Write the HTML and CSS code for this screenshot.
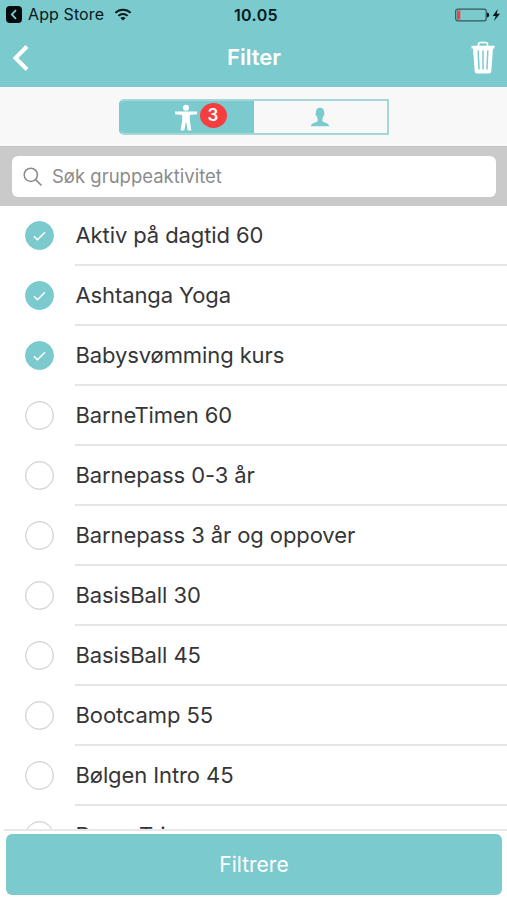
FILE: index.html
```html
<!DOCTYPE html>
<html lang="no">
<head>
<meta charset="utf-8">
<title>Filter</title>
<link rel="stylesheet" href="styles.css">
</head>
<body>
<div class="app">
  <header class="header">
    <div class="status">
      <div class="status-left">
        <svg class="back-app" width="16" height="17" viewBox="0 0 16 17"><rect width="16" height="17" rx="4" fill="#050b0c"/><path d="M10 4.2 5.8 8.5 10 12.8" fill="none" stroke="#7bcace" stroke-width="1.8"/></svg>
        <span class="carrier">App Store</span>
        <svg class="wifi" width="18" height="13" viewBox="0 0 18 13"><g fill="none" stroke="#07191d" stroke-width="2"><path d="M1.4 4.9C5.6.8 12.4.8 16.600 4.900"/><path d="M4.400 7.900C7 5.400 11 5.400 13.600 7.900"/></g><path d="M6.300 10Q9 7.800 11.700 10L9 12.600Z" fill="#07191d"/></svg>
      </div>
      <span class="time">10.05</span>
      <svg class="battery" width="46" height="14" viewBox="0 0 46 14"><rect x=".7" y="1.200" width="30.500" height="11.600" rx="2" fill="none" stroke="#35575b" stroke-width="1.200"/><rect x="2" y="2.500" width="3.300" height="9" fill="#ef4440"/><path d="M31.800 4.500Q34.300 4.800 34.300 7T31.800 9.500Z" fill="#07191d"/><path d="M42.700 1 37.700 8H40.700L39 13 45 5.700H41.800Z" fill="#07191d"/></svg>
    </div>
    <div class="nav">
      <svg class="back" width="18" height="28" viewBox="0 0 18 28"><path d="M16 2.500 4.500 14 16 25.500" fill="none" stroke="#fff" stroke-width="4"/></svg>
      <h1 class="title">Filter</h1>
      <svg class="trash" width="24" height="34" viewBox="0 0 24 34"><path d="M7.500 5V3.500Q7.500 1.500 9.500 1.500H14.500Q16.500 1.500 16.500 3.500V5" fill="none" stroke="#fff" stroke-width="1.600"/><path d="M.5 4.800H23.500V7.600H22L20.300 30.500Q20.100 32.500 18 32.500H6Q3.900 32.500 3.700 30.500L2 7.600H.5Z" fill="#fff"/><path d="M7.200 10 8 28M12 10V28M16.800 10 16 28" stroke="#7bcace" stroke-width="1.500" stroke-linecap="round"/></svg>
    </div>
  </header>
  <div class="tabs">
    <div class="segments">
      <div class="segment segment-active">
        <svg class="figure" width="24" height="28" viewBox="0 0 24 28"><circle cx="12" cy="3.700" r="3" fill="#fff"/><path d="M1 7.600H23V10.300L15.800 11V16.500L17.400 26.500H13.700L12.300 18.500H11.700L10.300 26.500H6.600L8.200 16.500V11L1 10.300Z" fill="#fff"/></svg>
        <span class="badge">3</span>
      </div>
      <div class="segment">
        <svg class="person" width="20" height="20" viewBox="0 0 20 20"><path d="M10 .8C12.800.8 14.300 2.700 14.100 5.700C14.800 6 14.400 8.200 13.600 8.700C13.300 10.200 12.600 11 12.300 11.700V14C13 15.500 18.600 15.500 19.200 19.200H.8C1.400 15.500 7 15.500 7.700 14V11.700C7.400 11 6.700 10.200 6.400 8.700C5.600 8.200 5.200 6 5.900 5.700C5.700 2.700 7.200.8 10 .8Z" fill="#7bcace"/></svg>
      </div>
    </div>
  </div>
  <div class="search">
    <div class="field">
      <svg class="glass" width="20" height="20" viewBox="0 0 20 20"><circle cx="7.800" cy="7.800" r="6.600" fill="none" stroke="#8b8b8b" stroke-width="1.500"/><path d="M12.600 12.600 18.500 18.500" stroke="#8b8b8b" stroke-width="1.700"/></svg>
      <span class="placeholder">Søk gruppeaktivitet</span>
    </div>
  </div>
  <ul class="list">
    <li class="row"><span class="check on"><svg width="14" height="12" viewBox="0 0 14 12"><path d="M1 6.300 4.400 9.700 12 2.200" fill="none" stroke="#fff" stroke-width="1.500"/></svg></span><span class="label">Aktiv på dagtid 60</span></li>
    <li class="row"><span class="check on"><svg width="14" height="12" viewBox="0 0 14 12"><path d="M1 6.300 4.400 9.700 12 2.200" fill="none" stroke="#fff" stroke-width="1.500"/></svg></span><span class="label">Ashtanga Yoga</span></li>
    <li class="row"><span class="check on"><svg width="14" height="12" viewBox="0 0 14 12"><path d="M1 6.300 4.400 9.700 12 2.200" fill="none" stroke="#fff" stroke-width="1.500"/></svg></span><span class="label">Babysvømming kurs</span></li>
    <li class="row"><span class="check"></span><span class="label">BarneTimen 60</span></li>
    <li class="row"><span class="check"></span><span class="label">Barnepass 0-3 år</span></li>
    <li class="row"><span class="check"></span><span class="label">Barnepass 3 år og oppover</span></li>
    <li class="row"><span class="check"></span><span class="label">BasisBall 30</span></li>
    <li class="row"><span class="check"></span><span class="label">BasisBall 45</span></li>
    <li class="row"><span class="check"></span><span class="label">Bootcamp 55</span></li>
    <li class="row"><span class="check"></span><span class="label">Bølgen Intro 45</span></li>
    <li class="row"><span class="check"></span><span class="label">DanseTrim</span></li>
  </ul>
  <footer class="footer"><button class="submit">Filtrere</button></footer>
</div>
</body>
</html>
```
FILE: styles.css
```css
* { box-sizing: border-box; }
body { margin: 0; font-family: Inter, "Liberation Sans", sans-serif; color: #353538; background: #fff; }
svg { display: block; flex: none; }
.app { width: 507px; height: 900px; display: flex; flex-direction: column; overflow: hidden; }
.header { height: 87px; flex: none; background: #7bcace; }
.status { height: 29px; display: grid; grid-template-columns: 1fr auto 1fr; align-items: center; padding: 0 6px; color: #07191d; }
.status-left { display: flex; align-items: center; height: 28px; align-self: start; }
.carrier { margin-left: 6px; font-size: 16px; line-height: 20px; letter-spacing: 0.1px; }
.wifi { margin-left: 10px; }
.time { padding-left: 5px; font-size: 16px; line-height: 20px; font-weight: 600; letter-spacing: 0.4px; }
.battery { justify-self: end; }
.nav { height: 58px; display: grid; grid-template-columns: 1fr auto 1fr; align-items: center; padding: 0 12px 0 11px; }
.title { margin: 0; padding: 0 0 2px 2px; font-size: 22px; line-height: 28px; font-weight: 600; color: #fff; }
.trash { justify-self: end; }
.tabs { height: 59px; flex: none; display: flex; justify-content: center; padding-top: 12px; background: #f8f8f8; }
.segments { width: 270px; height: 36px; display: flex; border: 2px solid #a5d6d8; border-left-color: #7bcace; border-radius: 5px 0 0 5px; overflow: hidden; }
.segment { flex: 0 0 50%; display: flex; align-items: center; justify-content: center; }
.segment-active { background: #7bcace; gap: 2px; padding-left: 26px; }
.figure { margin-top: 1px; }
.badge { width: 27px; height: 25px; border-radius: 50%; background: #f63e3e; color: #fff; font-size: 17px; line-height: 25px; font-weight: 600; text-align: center; margin-top: -4px; }
.person { margin-top: -1px; }
.search { height: 60px; flex: none; padding: 9px 11px 9px 12px; background: #cacaca; border-top: 1px solid #c2c2c2; }
.field { height: 41px; display: flex; align-items: center; gap: 9px; padding-left: 11px; background: #fff; border-radius: 6px; }
.placeholder { padding-bottom: 1px; font-size: 18.5px; line-height: 24px; color: #8b8b8b; }
.list { flex: 1; min-height: 0; margin: 0; padding: 0; list-style: none; overflow: hidden; }
.row { height: 60px; display: flex; padding-left: 25px; }
.check { width: 29px; height: 29px; margin: 15px 21px 0 0; flex: none; border: 1.5px solid #d0d0d0; box-shadow: inset 0 0 0 0.5px #dcdcdc; border-radius: 50%; display: flex; align-items: center; justify-content: center; }
.check.on { border-color: #7bcace; background: #7bcace; box-shadow: none; }
.label { flex: 1; display: flex; align-items: center; border-bottom: 2px solid #e6e6e7; font-size: 22px; line-height: 28px; letter-spacing: -0.1px; padding-left: 0.5px; white-space: nowrap; }
.footer { height: 71px; flex: none; margin-left: 4px; border-top: 2px solid #e8e8e8; padding: 3px 5px 5px 2px; background: #fff; }
.submit { display: block; width: 100%; height: 61px; border: 0; border-radius: 6px; background: #7bcace; color: #fff; font: 400 21px/28px Inter, "Liberation Sans", sans-serif; }
```
